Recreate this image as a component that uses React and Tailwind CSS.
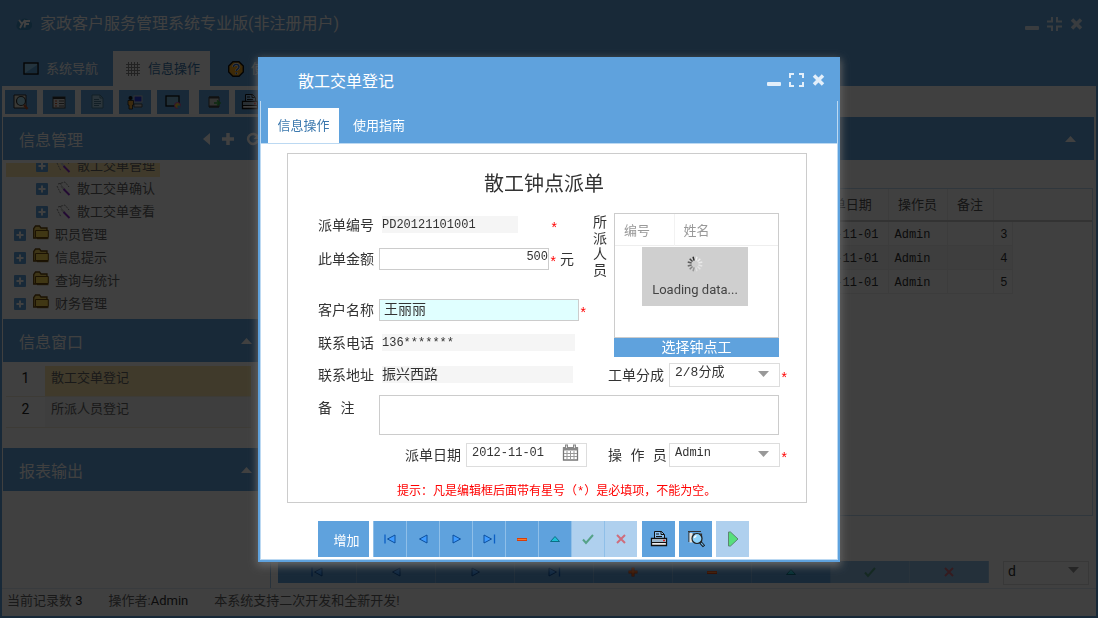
// App.jsx
// Housekeeping service manager: main window with the dispatch order dialog on top

import clsx from 'clsx';

const UI   = "font-[Roboto,'Noto_Sans_CJK_SC',sans-serif]";
const FORM = "font-['Liberation_Mono','Noto_Sans_CJK_SC',monospace]";

/* ---------- icons ---------- */

function Svg({ w = 16, h = 16, box, children, className }) {
  return (
    <svg width={w} height={h} viewBox={box || `0 0 ${w} ${h}`} className={clsx('shrink-0', className)} fill="none" aria-hidden="true">
      {children}
    </svg>
  );
}

const LogoIcon = () => (
  <Svg>
    <path d="M4 14a4 4 0 0 1-3-6 4 4 0 0 1 4-4 5 5 0 0 1 8 1 4 4 0 0 1 2 7 4 4 0 0 1-4 2z" fill="#3d8fc4" />
    <path d="M3 4l3 4 3-4M6 8l-2 4M8.500 11.500l1-6.500h4.500M9.500 8h3.500" stroke="#fff" strokeWidth="1.800" />
  </Svg>
);

const ScreenIcon = () => (
  <Svg>
    <rect x="1" y="2" width="14" height="11" fill="#8fd0f5" stroke="#111" strokeWidth="1.4" />
    <path d="M2 12L14 4v8z" fill="#3b86c8" opacity=".6" />
  </Svg>
);

const GridIcon = () => (
  <Svg>
    <path d="M3.5 1v14M6.5 1v14M9.5 1v14M12.5 1v14M1 3.5h14M1 6.5h14M1 9.5h14M1 12.5h14" stroke="#888" />
  </Svg>
);

const HelpIcon = () => (
  <Svg>
    <path d="M5 .7h6L15.300 5v6L11 15.300H5L.7 11V5z" fill="#f5a81c" stroke="#111" strokeWidth="1.4" />
    <path d="M5.500 6c0-3.500 5.500-3.500 5.500 0 0 2-2.700 2-2.700 4M8.300 11.500v1.700" stroke="#fff" strokeWidth="2.600" />
    <path d="M5.500 6c0-3.500 5.500-3.500 5.500 0 0 2-2.700 2-2.700 4M8.300 11.500v1.700" stroke="#2c5fb0" strokeWidth="1.400" />
  </Svg>
);

const SearchDocIcon = () => (
  <Svg>
    <path d="M1 1h12v13H1z" fill="#e8e2d4" stroke="#333" />
    <circle cx="8" cy="7" r="4.500" fill="#a9e0f2" stroke="#333" strokeWidth="1.200" />
    <path d="M11 11l3.500 4" stroke="#b3502b" strokeWidth="2.400" />
  </Svg>
);

const ListIcon = () => (
  <Svg>
    <rect x="2" y="3" width="12" height="11" fill="#ddd" stroke="#444" />
    <path d="M2 4h12" stroke="#333" strokeWidth="2" />
    <path d="M4 7h2M4 9.500h2M4 12h2" stroke="#c4552f" />
    <path d="M8 7h5M8 9.500h5M8 12h5" stroke="#555" />
  </Svg>
);

const PageIcon = () => (
  <Svg>
    <path d="M3 1h8l3 3v10H3z" fill="#a9d0e6" stroke="#4a7c99" />
    <path d="M11 1v3h3M5 5.500h5M5 7.500h7M5 9.500h7M5 11.500h5" stroke="#4a7c99" />
  </Svg>
);

const UserPcIcon = () => (
  <Svg>
    <rect x="7" y="2" width="8" height="6" fill="#2a3ee0" stroke="#ccc" />
    <path d="M7 10h8v3H7z" fill="#ccc" stroke="#555" />
    <circle cx="3.500" cy="4" r="2" fill="#111" />
    <path d="M1 6.500h5.500V11H5.500v4H2v-4H1z" fill="#f0a83a" stroke="#222" strokeWidth=".8" />
  </Svg>
);

const MonitorIcon = () => (
  <Svg>
    <rect x="1" y="2" width="13" height="10" fill="#7fb9d8" stroke="#111" strokeWidth="1.300" />
    <circle cx="12.500" cy="11.500" r="3" fill="#e9c93a" stroke="#d63fb2" />
    <path d="M12.500 11.500h3v3h-3z" fill="#48a8e8" />
  </Svg>
);

const ExportIcon = () => (
  <Svg>
    <path d="M3 3h10v10H3z" fill="#c9cfc8" stroke="#444" />
    <path d="M3 3.500h10M3 12.500h10" stroke="#444" strokeWidth="2" />
    <path d="M8 9h5M11 6.500L14 9l-3 2.500" stroke="#2fa83c" strokeWidth="1.600" />
  </Svg>
);

const PrinterIcon = () => (
  <Svg w={18} h={18}>
    <path d="M4.500 8.500V1.500h7l3 3v4z" fill="#8cc0ee" stroke="#111" />
    <path d="M6 4h3M6 6.500h6M11 1v3.500h3" stroke="#111" />
    <path d="M1.500 8.500h15v7h-15z" fill="#eee" stroke="#111" strokeWidth="1.300" />
    <path d="M2 9.500h14v2.500H2z" fill="#9db7cc" />
    <path d="M1.500 12.500h15" stroke="#111" />
    <path d="M13 10.500h2" stroke="#e02020" strokeWidth="1.500" />
  </Svg>
);

const PreviewIcon = () => (
  <Svg w={18} h={18}>
    <path d="M1 1.500h13M2 2v10M5.500 4h9v8" stroke="#333" strokeWidth="1.200" />
    <path d="M2.500 3h3v9.500h-3z" fill="#e8e4dc" />
    <circle cx="10" cy="8.500" r="5" fill="#8ed2fa" stroke="#222" strokeWidth="1.200" />
    <path d="M7.500 8a2.500 2.500 0 0 1 2-2.200" stroke="#fff" strokeWidth="1.500" />
    <path d="M13.500 12.500l3.500 3.800" stroke="#111" strokeWidth="3" />
    <path d="M14 13l2.500 2.700" stroke="#6db9ee" strokeWidth="1.200" />
  </Svg>
);

const RunIcon = () => (
  <Svg w={12} h={18}>
    <path d="M1.500 2h2L11 9l-7.500 7h-2z" fill="#56e07c" stroke="#5d8573" />
  </Svg>
);

const PencilIcon = () => (
  <Svg>
    <path d="M3 3l7-2 4 5M2 5l4 8M5 2l3 5" stroke="#888" strokeDasharray="2 1" />
    <path d="M6 5l4 4" stroke="#ccc" strokeWidth="2" />
    <path d="M8.500 8l6 6" stroke="#8b2fc9" strokeWidth="2" />
  </Svg>
);

const FolderIcon = () => (
  <Svg className="mb-1">
    <path d="M.7 13V3.500L2.500 1h4l1.500 2h6v10z" fill="#f6d45e" stroke="#6b4a0c" strokeWidth="1.300" />
    <path d="M2.500 12.500v-7h12.800v7z" fill="#ffd94f" stroke="#6b4a0c" />
    <path d="M4 13.700h11.500" stroke="#6b4a0c" />
  </Svg>
);

const ExpandIcon = () => (
  <Svg w={12} h={12}>
    <rect width="12" height="12" rx="1" fill="#5fa2dd" />
    <path d="M6 2.500v7M2.500 6h7" stroke="#fff" strokeWidth="2" />
  </Svg>
);

const CalendarIcon = () => (
  <Svg w={17} h={17}>
    <path d="M1.500 4h14v12h-14z" fill="#fff" stroke="#777" strokeWidth="1.300" />
    <path d="M1 3h15v3.500H1z" fill="#888" />
    <path d="M4.500.5v4M12.500.5v4" stroke="#888" strokeWidth="3" />
    <path d="M4.500 1.500v2.500M12.500 1.500v2.500" stroke="#ddd" />
    <path d="M5 7v9M8.500 7v9M12 7v9M2 9.500h13M2 12.500h13" stroke="#999" />
  </Svg>
);

function Caret({ up, className }) {
  return (
    <Svg w={11} h={6} className={className}>
      <path d={up ? 'M0 6L5.500 0 11 6z' : 'M0 0h11L5.500 6z'} fill="currentColor" />
    </Svg>
  );
}

function NavGlyph({ name }) {
  return (
    <Svg w={14} h={14}>
      {name === 'first' && <><path d="M2 2.500v9" stroke="#0b5fc4" strokeWidth="1.300" /><path d="M12 3v8L4.500 7z" fill="#3f9bff" stroke="#0b4f9e" /></>}
      {name === 'prev' && <path d="M11 3v8L3.500 7z" fill="#3f9bff" stroke="#0b4f9e" />}
      {name === 'next' && <path d="M4 3v8l7.500-4z" fill="#3f9bff" stroke="#0b4f9e" />}
      {name === 'last' && <><path d="M12.500 2.500v9" stroke="#0b5fc4" strokeWidth="1.300" /><path d="M2 3v8l7.500-4z" fill="#3f9bff" stroke="#0b4f9e" /></>}
      {name === 'plus' && <><path d="M7 2.500v9M2.500 7h9" stroke="#c23a0c" strokeWidth="3" /><path d="M7 3v8M3 7h8" stroke="#ff7a2a" /></>}
      {name === 'minus' && <><path d="M2 7.500h10" stroke="#d4400c" strokeWidth="3" /><path d="M2.500 7.500h9" stroke="#ff7a2a" /></>}
      {name === 'edit' && <path d="M2.500 9.500L7 4.500l4.500 5z" fill="#1fc0d6" stroke="#0c6f86" />}
      {name === 'ok' && <path d="M2 7.500l3 3.500 7-8" stroke="#55a288" strokeWidth="2" />}
      {name === 'cancel' && <path d="M3 3l8 8M11 3l-8 8" stroke="#cf6d7c" strokeWidth="2" />}
    </Svg>
  );
}

function Spinner() {
  const ticks = Array.from({ length: 12 }, (_, i) => i);
  return (
    <Svg>
      {ticks.map((i) => (
        <path key={i} d="M8 .5v4" stroke={i < 6 ? '#f2f2f2' : '#222'} strokeWidth="1.500" opacity={i < 6 ? 0.9 - i * 0.08 : 0.2 + (i - 5) * 0.12} transform={`rotate(${i * 30 + 15} 8 8)`} />
      ))}
    </Svg>
  );
}

function WindowButtons({ restored }) {
  return (
    <div className="flex items-center gap-2 text-[#e3effa]">
      <button type="button" aria-label="最小化">
        <Svg w={14} h={16}><rect y="10" width="14" height="4" rx="1" fill="currentColor" /></Svg>
      </button>
      <button type="button" aria-label="最大化">
        <Svg w={15} h={16}>
          <path
            d={restored ? 'M5 1v4.500H0M10 1v4.500h5M0 10.500h5V15M15 10.500h-5V15' : 'M5 2H1v4M10 2h4v4M1 10v4h4M14 10v4h-4'}
            stroke="currentColor"
            strokeWidth="2"
          />
        </Svg>
      </button>
      <button type="button" aria-label="关闭">
        <Svg w={13} h={16}><path d="M2 3.500l9 9M11 3.500l-9 9" stroke="currentColor" strokeWidth="3.500" /></Svg>
      </button>
    </div>
  );
}

/* ---------- main window ---------- */

const tree = [
  { label: '散工交单管理', child: true, active: true },
  { label: '散工交单确认', child: true },
  { label: '散工交单查看', child: true },
  { label: '职员管理' },
  { label: '信息提示' },
  { label: '查询与统计' },
  { label: '财务管理' },
];

const tools = [SearchDocIcon, ListIcon, PageIcon, UserPcIcon, MonitorIcon];

function PanelHeader({ title, children }) {
  return (
    <div className="flex h-[43px] shrink-0 items-center justify-between bg-[#5fa2dd] pl-4 pr-[18px] text-white">
      <h2 className="pt-1 text-base">{title}</h2>
      {children || <Caret up />}
    </div>
  );
}

function Sidebar() {
  return (
    <aside className="flex w-[268px] shrink-0 flex-col border-r border-[#5fa2dd]/60">
      <PanelHeader title="信息管理">
        <div className="-mr-2 flex items-center gap-3">
          <Svg w={7} h={12}><path d="M7 0v12L0 6z" fill="currentColor" /></Svg>
          <Svg w={12} h={12}><path d="M6 0v12M0 6h12" stroke="currentColor" strokeWidth="3.500" /></Svg>
          <Svg w={14} h={14}><path d="M11.500 4.500A5 5 0 1 0 12 8" stroke="currentColor" strokeWidth="2.500" /><path d="M13.500 1v6h-6z" fill="currentColor" /></Svg>
        </div>
      </PanelHeader>

      {/* Tree, scrolled a little past its first row */}
      <div className="mt-[3px] flex h-[156px] shrink-0 flex-col justify-end overflow-hidden px-[3px] pb-1 text-[13px] text-[#666]">
        {tree.map((n) => (
          <div key={n.label} className={clsx('flex h-[23px] shrink-0 items-center', n.active && 'w-[154px] bg-[#ffe8ac]', n.child ? 'pl-[30px]' : 'pl-2')}>
            <ExpandIcon />
            <span className="w-[29px] pl-[7px]">{n.child ? <PencilIcon /> : <FolderIcon />}</span>
            <span>{n.label}</span>
          </div>
        ))}
      </div>

      <PanelHeader title="信息窗口" />
      <ol className="mt-1 mb-5 mr-[19px] ml-[3px] text-[13px] text-[#666]">
        {['散工交单登记', '所派人员登记'].map((t, i) => (
          <li key={t} className="flex h-[31px] border-b border-[#f2ecd8]">
            <span className="w-[39px] pt-0.5 text-center text-sm text-[#222]">{i + 1}</span>
            <span className={clsx('flex-1 pt-0.5 pl-1.5', i === 0 ? 'bg-[#ffe8ac]' : 'bg-[#f5f5f5]')}>{t}</span>
          </li>
        ))}
      </ol>

      <PanelHeader title="报表输出" />
    </aside>
  );
}

function DimTable() {
  return (
    <div className="mt-7 mr-px h-[328px] border border-[#5fa2dd]/40">
      <table className="w-full table-fixed border-collapse text-[13px] text-[#555]">
        <colgroup>
          <col />
          <col className="w-[84px]" />
          <col className="w-[59px]" />
          <col className="w-[46px]" />
          <col className="w-[19px]" />
          <col className="w-20" />
        </colgroup>
        <thead>
          <tr className="h-8 border-b-2 border-[#ccc]">
            <th />
            <th className="border-r border-[#eee] font-normal">派单日期</th>
            <th className="border-r border-[#eee] font-normal">操作员</th>
            <th className="border-r border-[#eee] font-normal">备注</th>
            <th />
            <th />
          </tr>
        </thead>
        <tbody className={clsx(FORM, 'text-xs text-[#333]')}>
          {[3, 4, 5].map((n) => (
            <tr key={n} className="h-6">
              <td />
              <td className={clsx('border border-[#eee] pt-1 pl-0.5', n === 4 && 'bg-[#f5f5f5]')}>2012-11-01</td>
              <td className={clsx('border border-[#eee] pt-1 pl-1.5', n === 4 && 'bg-[#f5f5f5]')}>Admin</td>
              <td className={clsx('border border-[#eee]', n === 4 && 'bg-[#f5f5f5]')} />
              <td className={clsx('border border-[#eee] pt-1 pr-1 text-right', n === 4 && 'bg-[#f5f5f5]')}>{n}</td>
              <td />
            </tr>
          ))}
        </tbody>
      </table>
    </div>
  );
}

const pager = ['first', 'prev', 'next', 'last', 'plus', 'minus', 'edit', 'ok', 'cancel'];

function MainWindow() {
  return (
    <div className="flex min-h-screen flex-col border-2 border-[#5fa2dd] bg-white">
      <header className="bg-[#5fa2dd] text-white">
        <div className="flex h-[49px] items-center justify-between pr-[13px] pb-1.5 pl-3.5">
          <div className="flex items-center gap-2">
            <LogoIcon />
            <h1 className="text-base">家政客户服务管理系统专业版(非注册用户)</h1>
          </div>
          <WindowButtons restored />
        </div>
        <nav className="flex h-[35px] pl-[11px] text-[13px]">
          <button type="button" className="flex w-[100px] items-center gap-[7px] pl-2.5"><ScreenIcon />系统导航</button>
          <button type="button" className="flex w-[97px] items-center gap-[7px] bg-white pl-3 text-[#3b78ae]"><GridIcon />信息操作</button>
          <button type="button" className="flex items-center gap-[7px] pl-[18px]"><HelpIcon />使用指南</button>
        </nav>
      </header>

      <div className="flex h-[31px] items-center gap-1.5 pl-[3px]">
        {tools.map((Icon, i) => (
          <button key={i} type="button" aria-label={`工具${i + 1}`} className="flex h-6 w-8 items-center justify-center bg-[#5fa2dd]"><Icon /></button>
        ))}
        <button type="button" aria-label="导出" className="ml-1 flex h-6 w-[30px] items-center justify-center bg-[#5fa2dd]"><ExportIcon /></button>
        <button type="button" aria-label="打印" className="flex h-6 w-[30px] items-center justify-center bg-[#5fa2dd]"><PrinterIcon /></button>
      </div>

      <main className="flex flex-1 pr-0.5 pl-px">
        <Sidebar />
        <section className="ml-[7px] flex min-w-0 flex-1 flex-col">
          <PanelHeader title="" />
          <DimTable />
          <div className="mt-auto mb-[3px] flex items-center justify-between pr-[5px]">
            <div className="flex h-[22px]">
              {pager.map((p, i) => (
                <button key={p} type="button" aria-label={p} disabled={i > 6} className={clsx('flex w-[79px] items-center justify-center border-r border-white/20', i > 6 ? 'bg-[#8fbfe8]' : 'bg-[#5fa2dd]')}>
                  <NavGlyph name={p} />
                </button>
              ))}
            </div>
            <div className="relative">
              <select aria-label="排序" className="h-6 w-[86px] appearance-none border border-[#ddd] pb-1 pl-1 text-sm leading-4 text-[#333]">
                <option>d</option>
              </select>
              <Caret className="pointer-events-none absolute top-2 right-2.5 text-[#999]" />
            </div>
          </div>
        </section>
      </main>

      <footer className="flex h-7 items-center gap-[26px] border-t border-[#5fa2dd]/20 pb-1 pl-[5px] text-[13px] text-[#666]">
        <span>当前记录数 <span className="text-[#333]">3</span></span>
        <span>操作者:<span className="text-[#333]">Admin</span></span>
        <span>本系统支持二次开发和全新开发!</span>
      </footer>
    </div>
  );
}

/* ---------- dialog ---------- */

const Star = ({ className }) => <span className={clsx('w-[7px] pt-2 text-sm leading-4 text-[#f00]', className)}>*</span>;

function Row({ id, label, className, children }) {
  return (
    <div className={clsx('flex h-6 items-center', className)}>
      <label htmlFor={id} className="w-[61px] shrink-0 pt-[3px] text-sm whitespace-nowrap">{label}</label>
      {children}
    </div>
  );
}

function Combo({ id, value, className }) {
  return (
    <div className="relative w-[111px] shrink-0">
      <select id={id} className={clsx('block h-6 w-full appearance-none border border-[#ddd] bg-white pb-1 pl-[5px] leading-4', className)}>
        <option>{value}</option>
      </select>
      <Caret className="pointer-events-none absolute top-2 right-[11px] text-[#999]" />
    </div>
  );
}

function OrderForm() {
  return (
    <form className="mt-[9px] mr-[30px] ml-[26px] border border-[#ccc] pt-[15px] text-[#333]">
      <h3 className={clsx(UI, 'pt-px pr-1.5 text-center text-xl leading-7')}>散工钟点派单</h3>

      <div className={clsx(FORM, 'mt-[15px] mr-[19px] ml-[30px]')}>
        <div className="flex">
          <div className="flex w-[275px] shrink-0 flex-col gap-2">
            <Row id="no" label="派单编号">
              <input id="no" readOnly defaultValue="PD20121101001" className="ml-[3px] h-[17px] w-[136px] bg-[#f5f5f5] text-xs" />
              <Star className="ml-8" />
            </Row>
            <Row id="amount" label="此单金额" className="mt-0.5">
              <input id="amount" defaultValue="500" className="h-[22px] w-[170px] border border-[#ccc] pb-1 text-right text-xs" />
              <Star />
              <span className="ml-1 pt-[3px] text-sm">元</span>
            </Row>
            <Row id="customer" label="客户名称" className="mt-[19px]">
              <input id="customer" defaultValue="王丽丽" className="h-[22px] w-[200px] border border-[#ccc] bg-[#e0ffff] pb-1 pl-1 text-sm leading-4" />
              <Star />
            </Row>
            <Row id="phone" label="联系电话" className="mt-px">
              <input id="phone" readOnly defaultValue="136*******" className="ml-[3px] h-[17px] w-[193px] bg-[#f5f5f5] text-xs" />
            </Row>
            <Row id="address" label="联系地址">
              <input id="address" readOnly defaultValue="振兴西路" className="ml-[3px] h-[17px] w-[191px] bg-[#f5f5f5] text-sm" />
            </Row>
          </div>

          <div className="flex flex-1 flex-col justify-between">
            <div className="flex">
              <span className="w-[21px] pt-0.5 text-sm leading-4">所派人员</span>
              <div className="w-[165px]">
                <div className={clsx(UI, 'relative h-[125px] border border-[#ccc]')}>
                  <table className="w-full table-fixed text-[13px] text-[#999]">
                    <thead>
                      <tr className="h-8 border-b border-[#eee]">
                        <th className="w-[59px] border-r border-[#f2f2f2] pt-0.5 pl-[9px] text-left font-normal">编号</th>
                        <th className="pt-0.5 pl-[9px] text-left font-normal">姓名</th>
                      </tr>
                    </thead>
                  </table>
                  <div className="absolute top-[33px] left-[27px] flex h-[59px] w-[106px] flex-col items-center gap-2 bg-[#cfcfcf] pt-[9px] text-[13px] text-[#444]">
                    <Spinner />
                    Loading data...
                  </div>
                </div>
                <button type="button" className="block h-[19px] w-full bg-[#5fa2dd] pt-0.5 text-sm leading-4 text-white">选择钟点工</button>
              </div>
            </div>
            <Row id="share" label="工单分成" className="ml-[15px]">
              <Combo id="share" value="2/8分成" className="text-[13px]" />
              <Star />
            </Row>
          </div>
        </div>

        <div className="mt-2 flex">
          <label htmlFor="remark" className="w-[61px] pt-1 text-sm">备 注</label>
          <textarea id="remark" className="h-10 w-[400px] resize-none border border-[#ccc]" />
        </div>

        <div className="mt-2 flex">
          <Row id="date" label="派单日期" className="ml-[87px] w-[202px]">
            <div className="flex h-6 w-[121px] items-center border border-[#ddd] pr-[7px]">
              <input id="date" defaultValue="2012-11-01" className="w-full min-w-0 pb-1 pl-[5px] text-xs" />
              <button type="button" aria-label="选择日期" className="pb-1"><CalendarIcon /></button>
            </div>
          </Row>
          <Row id="operator" label="操 作 员" className="ml-px">
            <Combo id="operator" value="Admin" className="text-xs" />
            <Star />
          </Row>
        </div>
      </div>

      <p className={clsx(FORM, 'mt-[17px] mb-[2px] pl-[109px] text-xs text-[#f00]')}>提示：凡是编辑框后面带有星号（*）是必填项，不能为空。</p>
    </form>
  );
}

const actions = ['first', 'prev', 'next', 'last', 'minus', 'edit', 'ok', 'cancel'];

function OrderDialog() {
  return (
    <div role="dialog" aria-label="散工交单登记" className="w-[582px] border-2 border-[#5fa2dd] bg-white shadow-[0_3px_8px_1px_#666]">
      <div className="flex h-[42px] items-center justify-between bg-[#5fa2dd] pr-[13px] pl-[38px] text-white">
        <h2 className="pt-1 text-base">散工交单登记</h2>
        <WindowButtons />
      </div>

      <div className="border-x border-b border-[#bcd9f2] pb-0.5">
        <nav className="flex h-[43px] items-end border-b border-[#bcd9f2] bg-[#5fa2dd] pl-[7px] text-[13px] text-white">
          <button type="button" className="h-[35px] w-[71px] bg-white pt-0.5 text-[#3b78ae]">信息操作</button>
          <button type="button" className="h-[35px] px-3.5 pt-0.5">使用指南</button>
        </nav>

        <OrderForm />

        <div className="mt-[18px] flex h-9 gap-1 pl-[57px]">
          <button type="button" className="w-[51px] bg-[#5fa2dd] pt-1 pl-1.5 text-[13px] text-white">增加</button>
          <div className="mr-px flex">
            {actions.map((a, i) => (
              <button key={a} type="button" aria-label={a} disabled={i > 5} className={clsx('flex w-[33px] items-center justify-center border-l border-[#8fbfe8]', i > 5 ? 'bg-[#afd0ee]' : 'bg-[#5fa2dd]')}>
                <NavGlyph name={a} />
              </button>
            ))}
          </div>
          <button type="button" aria-label="打印" className="flex w-[33px] items-center justify-center bg-[#5fa2dd]"><PrinterIcon /></button>
          <button type="button" aria-label="预览" className="flex w-[33px] items-center justify-center bg-[#5fa2dd]"><PreviewIcon /></button>
          <button type="button" aria-label="运行" className="flex w-[33px] items-center justify-center bg-[#afd0ee]"><RunIcon /></button>
        </div>
      </div>
    </div>
  );
}

export default function App() {
  return (
    <div className={UI}>
      <MainWindow />
      <div className="fixed inset-0 grid place-items-center bg-black/75">
        <OrderDialog />
      </div>
    </div>
  );
}
